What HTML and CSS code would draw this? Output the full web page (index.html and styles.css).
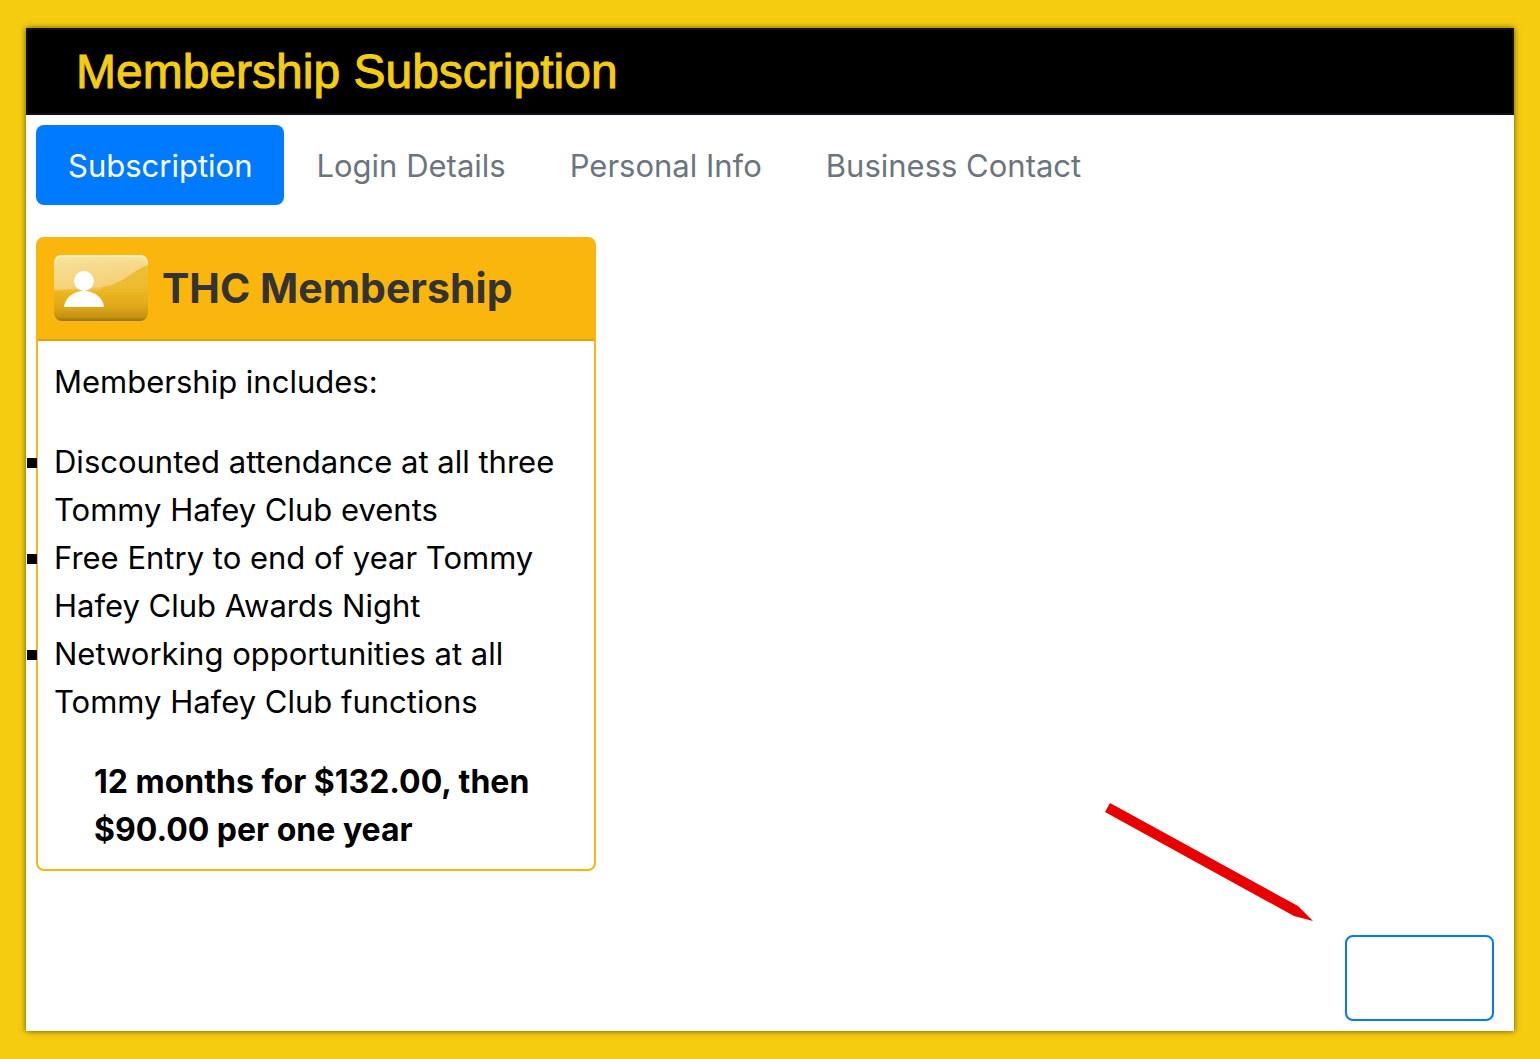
FILE: index.html
```
<!DOCTYPE html>
<html lang="en">
<head>
<meta charset="utf-8">
<meta name="viewport" content="width=device-width, initial-scale=1">
<title>Membership Subscription</title>
<link rel="stylesheet" href="styles.css">
</head>
<body>
<main class="panel">
  <header class="panel-header"><h1 class="panel-title">Membership Subscription</h1></header>
  <div class="panel-body">
    <nav class="tabs">
      <a class="tab tab-active" href="#subscription" aria-current="step">Subscription</a>
      <a class="tab" href="#login">Login Details</a>
      <a class="tab" href="#personal">Personal Info</a>
      <a class="tab" href="#business">Business Contact</a>
    </nav>
    <section class="card">
      <div class="card-header">
        <svg class="card-icon" width="94" height="68" viewBox="0 0 94 68" aria-hidden="true">
          <defs>
            <linearGradient id="badge" x1="0" y1="0" x2="0" y2="1">
              <stop offset="0" stop-color="#fbe9a8"/>
              <stop offset=".12" stop-color="#f6d98a"/>
              <stop offset=".5" stop-color="#f1c65a"/>
              <stop offset=".56" stop-color="#ecb71f"/>
              <stop offset=".8" stop-color="#dda718"/>
              <stop offset=".94" stop-color="#c49212"/>
              <stop offset="1" stop-color="#94700e"/>
            </linearGradient>
            <linearGradient id="sheen" x1="0" y1="0" x2="1" y2="0">
              <stop offset="0" stop-color="#f8e3a0" stop-opacity=".5"/>
              <stop offset="1" stop-color="#f8dc8c" stop-opacity=".3"/>
            </linearGradient>
          </defs>
          <rect x="0" y="1" width="94" height="66" rx="8" fill="url(#badge)"/>
          <path d="M94 11C78 16 70 30 48 33L46 37H94Z" fill="#eab722" opacity=".75"/>
          <path d="M0 10Q0 2 8 2H86Q94 2 94 11C78 16 70 30 48 33L0 36Z" fill="url(#sheen)"/>
          <path d="M1 10Q1 2 8 2H86Q93 2 93 10" fill="none" stroke="#fdf0bc" stroke-width="2" opacity=".8"/>
          <circle cx="30" cy="27" r="10" fill="#fff"/>
          <path d="M10 53C11 44 19 37 30 37S49 44 50 53Z" fill="#fff"/>
        </svg>
        <h2 class="card-title">THC Membership</h2>
      </div>
      <div class="card-body">
        <p class="intro">Membership includes:</p>
        <ul class="benefits">
          <li>Discounted attendance at all three Tommy Hafey Club events</li>
          <li>Free Entry to end of year Tommy Hafey Club Awards Night</li>
          <li>Networking opportunities at all Tommy Hafey Club functions</li>
        </ul>
        <p class="price">12 months for $132.00, then $90.00 per one year</p>
      </div>
    </section>
    <div class="actions">
      <svg class="pointer" width="208" height="118" viewBox="0 0 208 118" aria-hidden="true">
        <path d="M5 0L193 103L208 118L189 113L0 9Z" fill="#e80000"/>
      </svg>
      <button class="next" type="button" aria-label="Next"></button>
    </div>
  </div>
</main>
</body>
</html>
```
FILE: styles.css
```
* { box-sizing: border-box; }

body {
  margin: 0;
  padding: 28px 26px;
  background: #f5cc10;
  color: #000;
  font: 31px/48px Inter, "Liberation Sans", sans-serif;
}

h1, h2, p, ul { margin: 0; padding: 0; }

.panel {
  display: flex;
  flex-direction: column;
  min-height: calc(100vh - 56px);
  background: #fff;
  box-shadow: 0 0 6px rgba(0, 0, 0, .6);
}

.panel-header {
  padding: 14px 48px;
  border: 2px solid #0c1117;
  background: #000;
}

.panel-title {
  color: #f5cc10;
  font: 48px/55px "Liberation Sans", Arial, sans-serif;
  -webkit-text-stroke: 1px #f5cc10;
}

.panel-body {
  display: flex;
  flex: 1;
  flex-direction: column;
  padding: 10px;
}

.tabs { display: flex; flex-wrap: wrap; }

.tab {
  padding: 17px 32px 15px;
  border-radius: 8px;
  color: #6c757d;
  text-decoration: none;
}

.tab-active { background: #007bff; color: #fff; }

.card {
  width: 100%;
  max-width: 560px;
  margin-top: 32px;
  border: 2px solid #fab60c;
  border-radius: 8px;
}

.card-header {
  display: flex;
  align-items: center;
  gap: 14px;
  padding: 15px 16px 17px;
  border-bottom: 2px solid #e1a10b;
  border-radius: 5px 5px 0 0;
  background: #fab60c;
}

.card-title {
  color: #333;
  font-size: 41px;
  font-weight: 700;
}

.card-body { padding: 17px 16px 15px; }

.benefits { margin: 32px 0; list-style: square; }

.price {
  padding-left: 40px;
  font-size: 32px;
  font-weight: 700;
}

.actions {
  position: relative;
  display: flex;
  justify-content: flex-end;
  margin-top: auto;
  padding: 64px 10px 0;
}

.pointer {
  position: absolute;
  right: 191px;
  bottom: 100px;
}

.next {
  width: 149px;
  height: 86px;
  border: 2px solid #007bff;
  border-radius: 8px;
  background: #fff;
}
```
